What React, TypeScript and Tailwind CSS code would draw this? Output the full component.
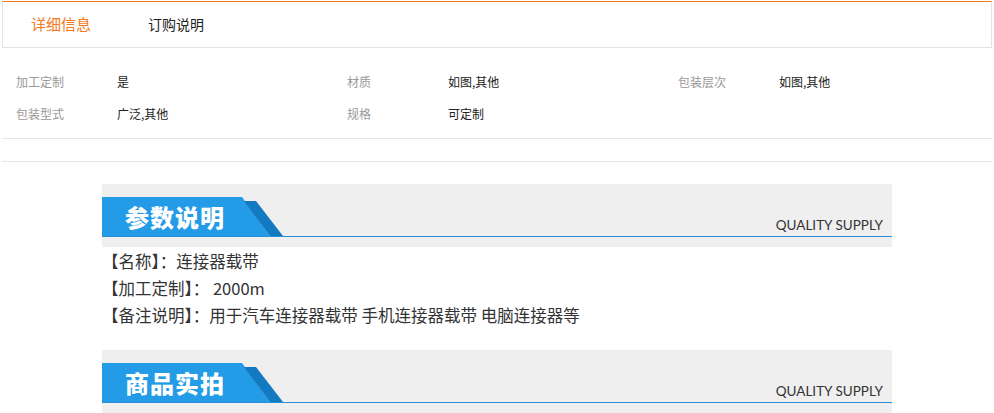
import React from "react";

const attrs = [
  [
    ["加工定制", "是"],
    ["材质", "如图,其他"],
    ["包装层次", "如图,其他"],
  ],
  [
    ["包装型式", "广泛,其他"],
    ["规格", "可定制"],
  ],
];

const SectionBanner = ({ title }: { title: string }) => (
  <div className="bg-[#efefef] pt-[13px] pb-[10px]">
    <div className="flex items-end justify-between border-b border-[#2a8dd8]">
      <div className="relative w-[181px] h-[39px] flex items-center pl-[23px]">
        <svg className="absolute inset-0" width="181" height="39" viewBox="0 0 181 39">
          <polygon points="0,0 140,0 168,39 0,39" fill="#249be6" />
          <polygon points="142,4 154,4 181,39 168,39" fill="#1379c0" />
        </svg>
        <span className="relative text-[24px] font-black text-white tracking-[1px] leading-none">
          {title}
        </span>
      </div>
      <span className="pr-[9px] pb-[4px] text-[13.5px] text-[#333] font-['Lato',sans-serif] leading-none">
        QUALITY SUPPLY
      </span>
    </div>
  </div>
);

const App = () => {
  return (
    <div className="min-h-screen bg-white font-['Noto_Sans_CJK_SC','Noto_Sans',sans-serif] text-[#333]">
      <div className="mt-px ml-[2px] mr-[2px] h-[47px] border border-t-[#f07a1a] border-[#e3e3e3] flex items-center pl-[28px] gap-[57px]">
        <span className="text-[15px] text-[#f47920]">详细信息</span>
        <span className="text-[14px] text-[#222]">订购说明</span>
      </div>

      <div className="pt-[18px] pb-[8px] pl-[16px]">
        {attrs.map((row, i) => (
          <div key={i} className="flex h-[32px] items-center text-[12px]">
            {row.map(([label, value]) => (
              <div key={label} className="flex w-[331px] shrink-0">
                <span className="w-[101px] text-[#999]">{label}</span>
                <span className="text-[#222]">{value}</span>
              </div>
            ))}
          </div>
        ))}
      </div>

      <div className="mx-[2px] h-[24px] border-y border-[#e5e5e5]" />

      <div className="w-[790px] mx-auto mt-[22px]">
        <SectionBanner title="参数说明" />
        <div className="pt-[1px] pb-[21px] text-[16.5px] leading-[27px] text-[#333]">
          <p>【名称】：连接器载带</p>
          <p>【加工定制】： 2000m</p>
          <p>【备注说明】：用于汽车连接器载带 手机连接器载带 电脑连接器等</p>
        </div>
        <SectionBanner title="商品实拍" />
      </div>
    </div>
  );
};

export default App;
